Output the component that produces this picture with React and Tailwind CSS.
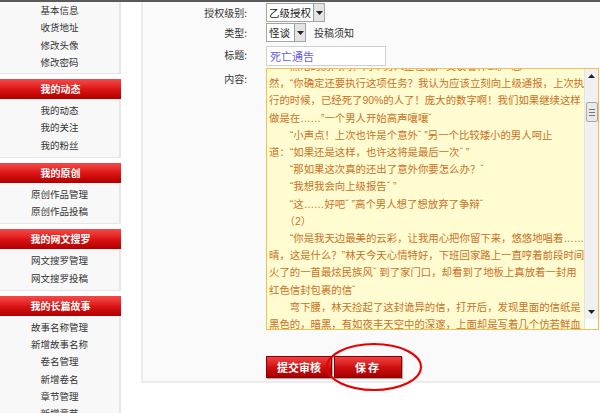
// 个人中心 - 原创作品投稿编辑页
const sections = [
  { title: null, items: ['基本信息', '收货地址', '修改头像', '修改密码'] },
  { title: '我的动态', items: ['我的动态', '我的关注', '我的粉丝'] },
  { title: '我的原创', items: ['原创作品管理', '原创作品投稿'] },
  { title: '我的网文搜罗', items: ['网文搜罗管理', '网文搜罗投稿'] },
  { title: '我的长篇故事', items: ['故事名称管理', '新增故事名称', '卷名管理', '新增卷名', '章节管理', '新增章节'] },
];

const lines = [
  '　　黑暗的房间内，两个男人正在低声交谈着什么。“忽',
  '然，“你确定还要执行这项任务？我认为应该立刻向上级通报，上次执',
  '行的时候，已经死了90%的人了！庞大的数字啊！我们如果继续这样',
  '做是在……”一个男人开始高声嚷嚷ˇ',
  '　　“小声点！上次也许是个意外ˇ ”另一个比较矮小的男人呵止',
  '道：“如果还是这样，也许这将是最后一次ˇ ”',
  '　　“那如果这次真的还出了意外你要怎么办？ˇ',
  '　　“我想我会向上级报告ˇ ”',
  '　　“这……好吧ˇ ”高个男人想了想放弃了争辩ˇ',
  '　　（2）',
  '　　“你是我天边最美的云彩，让我用心把你留下来，悠悠地唱着……',
  '晴，这是什么？”林天今天心情特好，下班回家路上一直哼着前段时间',
  '火了的一首最炫民族风ˇ 到了家门口，却看到了地板上真放着一封用',
  '红色信封包裹的信ˇ',
  '　　弯下腰，林天捡起了这封诡异的信，打开后，发现里面的信纸是',
  '黑色的，暗黑，有如夜丰天空中的深邃，上面却是写着几个仿若鲜血',
];

function Arrow({ up }) {
  return (
    <svg width="7" height="4" viewBox="0 0 7 4">
      <path d={up ? 'M0 4 L3.5 0 L7 4 Z' : 'M0 0 L3.5 4 L7 0 Z'} fill="#222" />
    </svg>
  );
}

function Select({ value, width }) {
  return (
    <div className={`flex h-[19px] ${width} items-stretch border border-[#a5a5a5] bg-white`}>
      <span className="flex-1 pl-[2px] text-[10.5px] leading-[17px] text-[#222]">{value}</span>
      <span className="flex w-[11px] items-center justify-center border-l border-[#9a9a9a] bg-[#e4e4e4]">
        <Arrow />
      </span>
    </div>
  );
}

export default function App() {
  return (
    <div className="relative h-[413px] w-[600px] overflow-hidden bg-white font-['Noto_Sans_CJK_SC',sans-serif]">
      <div className="h-[2px] bg-[#5a5a5a]" />
      <div className="flex">
        <aside className="flex w-[121px] shrink-0 flex-col gap-[5px]">
          {sections.map((section, i) => (
            <div key={i}>
              {section.title && (
                <div className="h-[20px] bg-linear-to-b from-[#f64848] via-[#dc1414] to-[#b00000] text-center text-[10px] font-bold leading-[20px] text-white">
                  {section.title}
                </div>
              )}
              <div
                className={`border-r-2 border-b border-[#e6e6e6] bg-[#f8f8f8] ${
                  section.title ? 'pt-[3px] pb-[3px]' : 'pb-[2px]'
                }`}
              >
                {section.items.map((item) => (
                  <div key={item} className="text-center text-[9.5px] leading-[17.25px] text-[#333]">
                    {item}
                  </div>
                ))}
              </div>
            </div>
          ))}
        </aside>

        <main className="ml-[20px] h-[381px] flex-1 border-b-2 border-l-2 border-[#ececec] bg-[#fafafa] pt-[1px]">
          <div className="grid grid-cols-[104px_1fr] gap-x-[19px] text-[10px] text-[#333]">
            <div className="flex h-[19px] items-center justify-end">授权级别:</div>
            <div className="flex">
              <Select value="乙级授权" width="w-[59px]" />
            </div>

            <div className="mt-[1px] flex h-[19px] items-center justify-end">类型:</div>
            <div className="mt-[1px] flex items-center gap-[8px]">
              <Select value="怪谈" width="w-[40px]" />
              <span className="text-[10px]">投稿须知</span>
            </div>

            <div className="mt-[4px] flex h-[20px] items-center justify-end pb-[3px]">标题:</div>
            <div className="mt-[4px]">
              <div className="h-[20px] w-[120px] border border-[#d0d0d0] bg-white pl-[3px] text-[11px] leading-[18px] text-[#6b5fd3]">
                死亡通告
              </div>
            </div>

            <div className="mt-[2px] pt-[3px] text-right">内容:</div>
            <div className="mt-[2px]">
              <div className="flex h-[262px] w-[333px] border border-[#f0c050] bg-[#fffcd2]">
                <div className="flex-1 overflow-hidden pl-[2px]">
                  <div className="-mt-[11px]">
                    {lines.map((line, i) => (
                      <div
                        key={i}
                        className="whitespace-pre font-['Liberation_Sans','Noto_Sans_CJK_SC',sans-serif] text-[10.4px] leading-[17.2px] text-[#c9711f]"
                      >
                        {line}
                      </div>
                    ))}
                  </div>
                </div>
                <div className="flex w-[14px] flex-col border-l border-[#e4e4e4] bg-[#f0f0f0]">
                  <div className="flex h-[14px] items-center justify-center">
                    <Arrow up />
                  </div>
                  <div className="flex-1">
                    <div className="mx-auto mt-[19px] flex h-[20px] w-[12px] flex-col items-center justify-center gap-[2px] rounded-[2px] border border-[#a8a8a8] bg-[#e9e9e9]">
                      <span className="h-px w-[6px] bg-[#777]" />
                      <span className="h-px w-[6px] bg-[#777]" />
                      <span className="h-px w-[6px] bg-[#777]" />
                    </div>
                  </div>
                  <div className="flex h-[14px] items-center justify-center">
                    <Arrow />
                  </div>
                  <div className="h-[10px] bg-white" />
                </div>
              </div>
            </div>

            <div />
            <div className="mt-[26px] flex gap-[2px]">
              <button
                type="button"
                className="h-[22px] w-[66px] border border-[#8a0000] bg-linear-to-b from-[#f04040] via-[#d01010] to-[#a80000] text-[11px] font-bold text-white shadow-[1px_1px_1px_rgba(0,0,0,0.3)]"
              >
                提交审核
              </button>
              <button
                type="button"
                className="h-[22px] w-[68px] border border-[#8a0000] bg-linear-to-b from-[#f04040] via-[#d01010] to-[#a80000] text-[11px] font-bold tracking-[2px] text-white shadow-[1px_1px_1px_rgba(0,0,0,0.3)]"
              >
                保存
              </button>
            </div>
          </div>
        </main>
      </div>

      <svg className="absolute left-[325px] top-[342px]" width="98" height="50" viewBox="0 0 98 50">
        <ellipse cx="49" cy="25" rx="47" ry="23" fill="none" stroke="#e80000" strokeWidth="2" />
      </svg>
    </div>
  );
}
